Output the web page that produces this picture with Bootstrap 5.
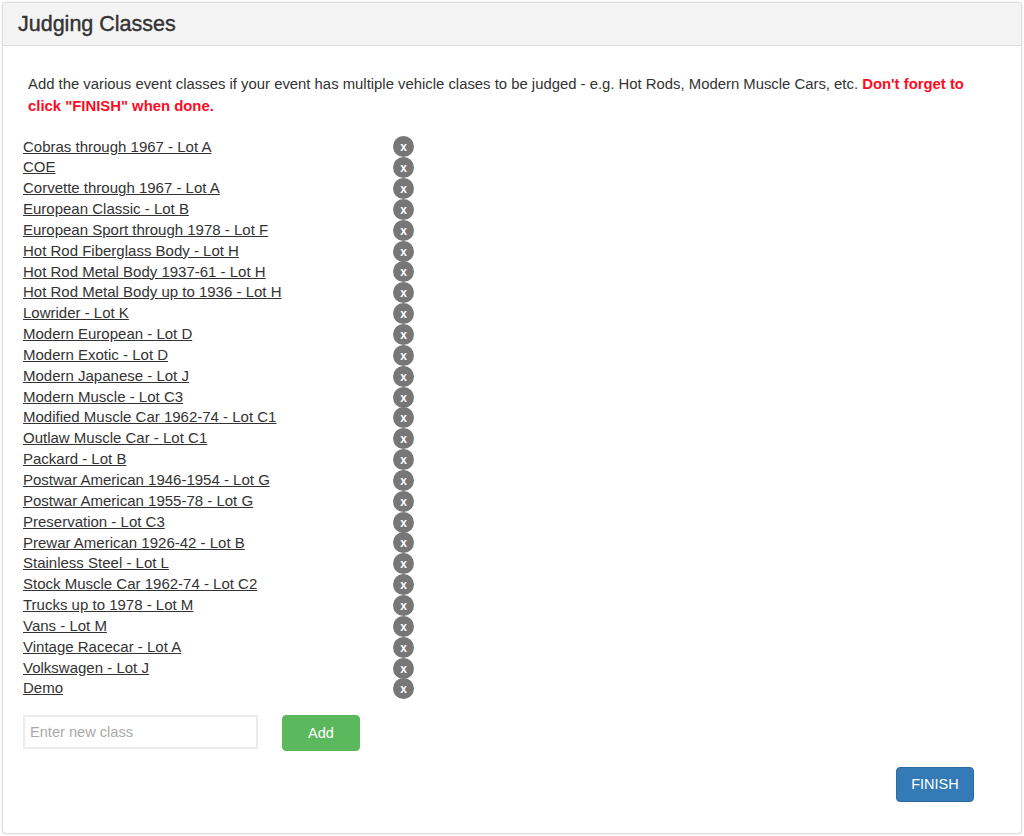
<!DOCTYPE html>
<html lang="en">
<head>
    <meta charset="UTF-8">
    <meta name="viewport" content="width=device-width, initial-scale=1.0">
    <title>Judging Classes</title>
    <link href="https://cdn.jsdelivr.net/npm/bootstrap@5.3.0/dist/css/bootstrap.min.css" rel="stylesheet">
    <style>
        body {
            background-color: #fff;
            color: #333;
            font-family: "Liberation Sans", Arial, sans-serif;
            font-size: 15px;
            height: 836px;
            overflow: hidden;
            padding: 2px;
        }
        .judge-panel {
            height: 832px;
            border: 1px solid #ddd;
            border-radius: 4px;
            box-shadow: 0 0 2px rgba(0, 0, 0, .14);
        }
        .judge-head {
            height: 43px;
            background-color: #f4f4f4;
            border-bottom: 1px solid #ddd;
            padding: 0 15px;
            border-top-left-radius: 3px;
            border-top-right-radius: 3px;
        }
        .judge-head h1 {
            font-size: 21.5px;
            line-height: 42px;
            font-weight: 500;
            margin: 0;
            color: #333;
            -webkit-text-stroke: .4px #333;
        }
        .judge-body {
            padding: 27px 20px 0;
        }
        .judge-intro {
            margin: 0 0 19.5px 5px;
            font-size: 14.87px;
            line-height: 22px;
            color: #333;
        }
        .judge-intro strong {
            color: #ff0a23;
        }
        .class-row {
            width: 391px;
            height: 20.85px;
            line-height: 20.85px;
        }
        .class-name {
            color: #333;
        }
        .class-x {
            width: 21px;
            height: 21px;
            border-radius: 50%;
            background-color: #777;
            color: #fff;
            font-size: 12px;
            font-weight: 700;
            line-height: 22px;
            text-align: center;
            text-decoration: none;
            flex-shrink: 0;
        }
        .add-line {
            margin-top: 15.5px;
            gap: 24px;
        }
        .new-class {
            width: 235px;
            height: 34px;
            border: 2px solid #ececec;
            border-radius: 0;
            padding: 0 5px;
            font-size: 14.6px;
            color: #333;
        }
        .new-class::placeholder {
            color: #a9a9a9;
        }
        .btn-add, .btn-finish {
            font-size: 14.5px;
            line-height: 1;
            color: #fff;
            border-radius: 4px;
            padding: 0;
        }
        .btn-add {
            width: 78px;
            height: 36px;
            background-color: #5cb85c;
            border-color: #5cb85c;
        }
        .btn-finish {
            width: 78px;
            height: 35px;
            background-color: #337ab7;
            border-color: #2e6da4;
        }
        .finish-line {
            margin-top: 16px;
            padding-right: 27px;
        }
    </style>
</head>
<body>
<div class="judge-panel bg-white">
    <div class="judge-head">
        <h1>Judging Classes</h1>
    </div>
    <div class="judge-body">
        <p class="judge-intro">Add the various event classes if your event has multiple vehicle clases to be judged - e.g. Hot Rods, Modern Muscle Cars, etc. <strong>Don't forget to click "FINISH" when done.</strong></p>
        <div id="class-list"></div>
        <div class="d-flex add-line">
            <input type="text" class="new-class" placeholder="Enter new class">
            <button type="button" class="btn btn-add">Add</button>
        </div>
        <div class="d-flex justify-content-end finish-line">
            <button type="button" class="btn btn-finish">FINISH</button>
        </div>
    </div>
</div>

<script src="https://cdn.jsdelivr.net/npm/bootstrap@5.3.0/dist/js/bootstrap.bundle.min.js"></script>
<script>
    const classes = [
        'Cobras through 1967 - Lot A',
        'COE',
        'Corvette through 1967 - Lot A',
        'European Classic - Lot B',
        'European Sport through 1978 - Lot F',
        'Hot Rod Fiberglass Body - Lot H',
        'Hot Rod Metal Body 1937-61 - Lot H',
        'Hot Rod Metal Body up to 1936 - Lot H',
        'Lowrider - Lot K',
        'Modern European - Lot D',
        'Modern Exotic - Lot D',
        'Modern Japanese - Lot J',
        'Modern Muscle - Lot C3',
        'Modified Muscle Car 1962-74 - Lot C1',
        'Outlaw Muscle Car - Lot C1',
        'Packard - Lot B',
        'Postwar American 1946-1954 - Lot G',
        'Postwar American 1955-78 - Lot G',
        'Preservation - Lot C3',
        'Prewar American 1926-42 - Lot B',
        'Stainless Steel - Lot L',
        'Stock Muscle Car 1962-74 - Lot C2',
        'Trucks up to 1978 - Lot M',
        'Vans - Lot M',
        'Vintage Racecar - Lot A',
        'Volkswagen - Lot J',
        'Demo'
    ];
    const list = document.getElementById('class-list');
    classes.forEach(name => {
        const row = document.createElement('div');
        row.className = 'class-row d-flex justify-content-between align-items-center';
        row.innerHTML = `<a href="#" class="class-name">${name}</a><a href="#" class="class-x">x</a>`;
        list.appendChild(row);
    });
</script>
</body>
</html>
